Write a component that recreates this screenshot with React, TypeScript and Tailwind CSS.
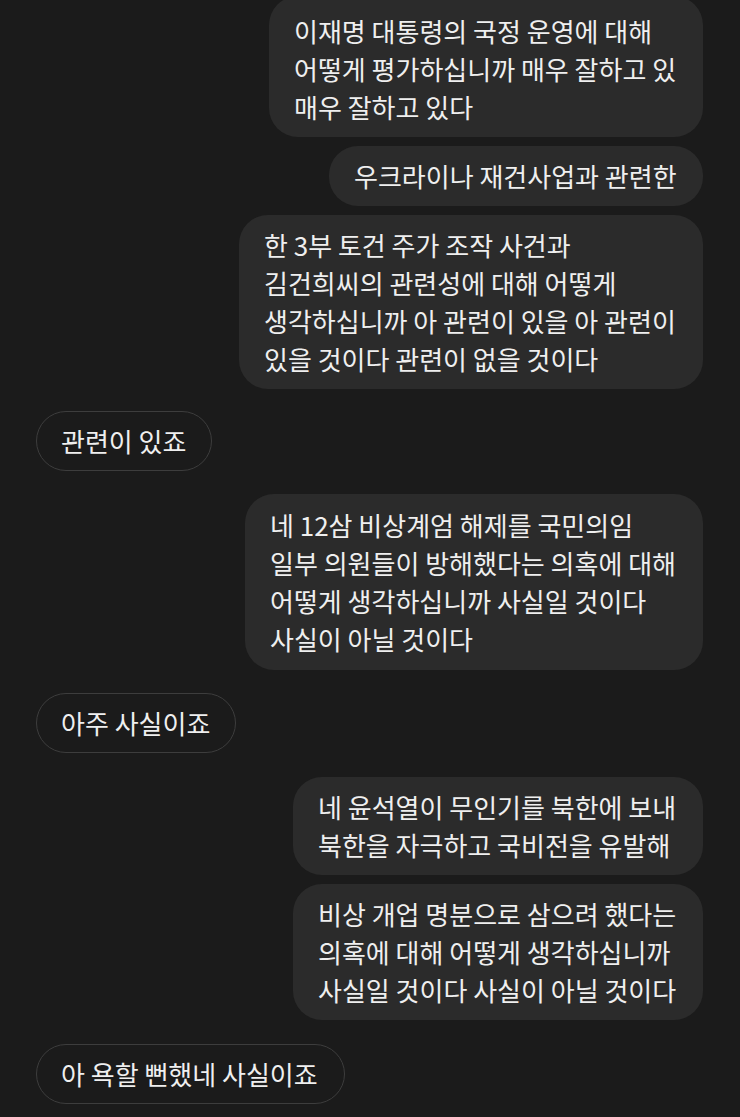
import React from "react";

const font = {
  fontFamily: '"Noto Sans CJK KR", "Noto Sans", sans-serif',
};

function Right({ lines, w, extra = "" }: { lines: string[]; w: string; extra?: string }) {
  return (
    <div className={`self-end ${w} rounded-[29px] bg-[#2b2b2b] pl-[25px] pr-[20px] text-[26px] leading-[38px] text-[#efefef] ${extra}`}>
      {lines.map((l, i) => (
        <div key={i} className="whitespace-nowrap">
          {l}
        </div>
      ))}
    </div>
  );
}

function Left({ text, w }: { text: string; w: string }) {
  return (
    <div className={`self-start ${w} h-[60px] rounded-full border border-[#3d3d3d] bg-[#1b1b1b] pl-[24px] flex items-center text-[26px] leading-[38px] text-[#efefef] whitespace-nowrap`}>
      {text}
    </div>
  );
}

export default function App() {
  return (
    <div className="w-[740px] h-[1117px] overflow-hidden bg-[#1b1b1b]" style={font}>
      <div className="flex flex-col pl-[36px] pr-[37px]">
        <Right
          w="w-[434px]"
          extra="mt-[-4px] pt-[16px] pb-[11px]"
          lines={["이재명 대통령의 국정 운영에 대해", "어떻게 평가하십니까 매우 잘하고 있", "매우 잘하고 있다"]}
        />
        <Right w="w-[374px]" extra="mt-[9px] py-[11px]" lines={["우크라이나 재건사업과 관련한"]} />
        <Right
          w="w-[464px]"
          extra="mt-[9px] py-[11px]"
          lines={["한 3부 토건 주가 조작 사건과", "김건희씨의 관련성에 대해 어떻게", "생각하십니까 아 관련이 있을 아 관련이", "있을 것이다 관련이 없을 것이다"]}
        />
        <div className="mt-[22px]">
          <Left text="관련이 있죠" w="w-[176px]" />
        </div>
        <Right
          w="w-[458px]"
          extra="mt-[23px] py-[12px]"
          lines={["네 12삼 비상계엄 해제를 국민의임", "일부 의원들이 방해했다는 의혹에 대해", "어떻게 생각하십니까 사실일 것이다", "사실이 아닐 것이다"]}
        />
        <div className="mt-[23px]">
          <Left text="아주 사실이죠" w="w-[200px]" />
        </div>
        <Right
          w="w-[410px]"
          extra="mt-[24px] py-[11px]"
          lines={["네 윤석열이 무인기를 북한에 보내", "북한을 자극하고 국비전을 유발해"]}
        />
        <Right
          w="w-[410px]"
          extra="mt-[9px] py-[11px]"
          lines={["비상 개업 명분으로 삼으려 했다는", "의혹에 대해 어떻게 생각하십니까", "사실일 것이다 사실이 아닐 것이다"]}
        />
        <div className="mt-[24px]">
          <Left text="아 욕할 뻔했네 사실이죠" w="w-[309px]" />
        </div>
      </div>
    </div>
  );
}
